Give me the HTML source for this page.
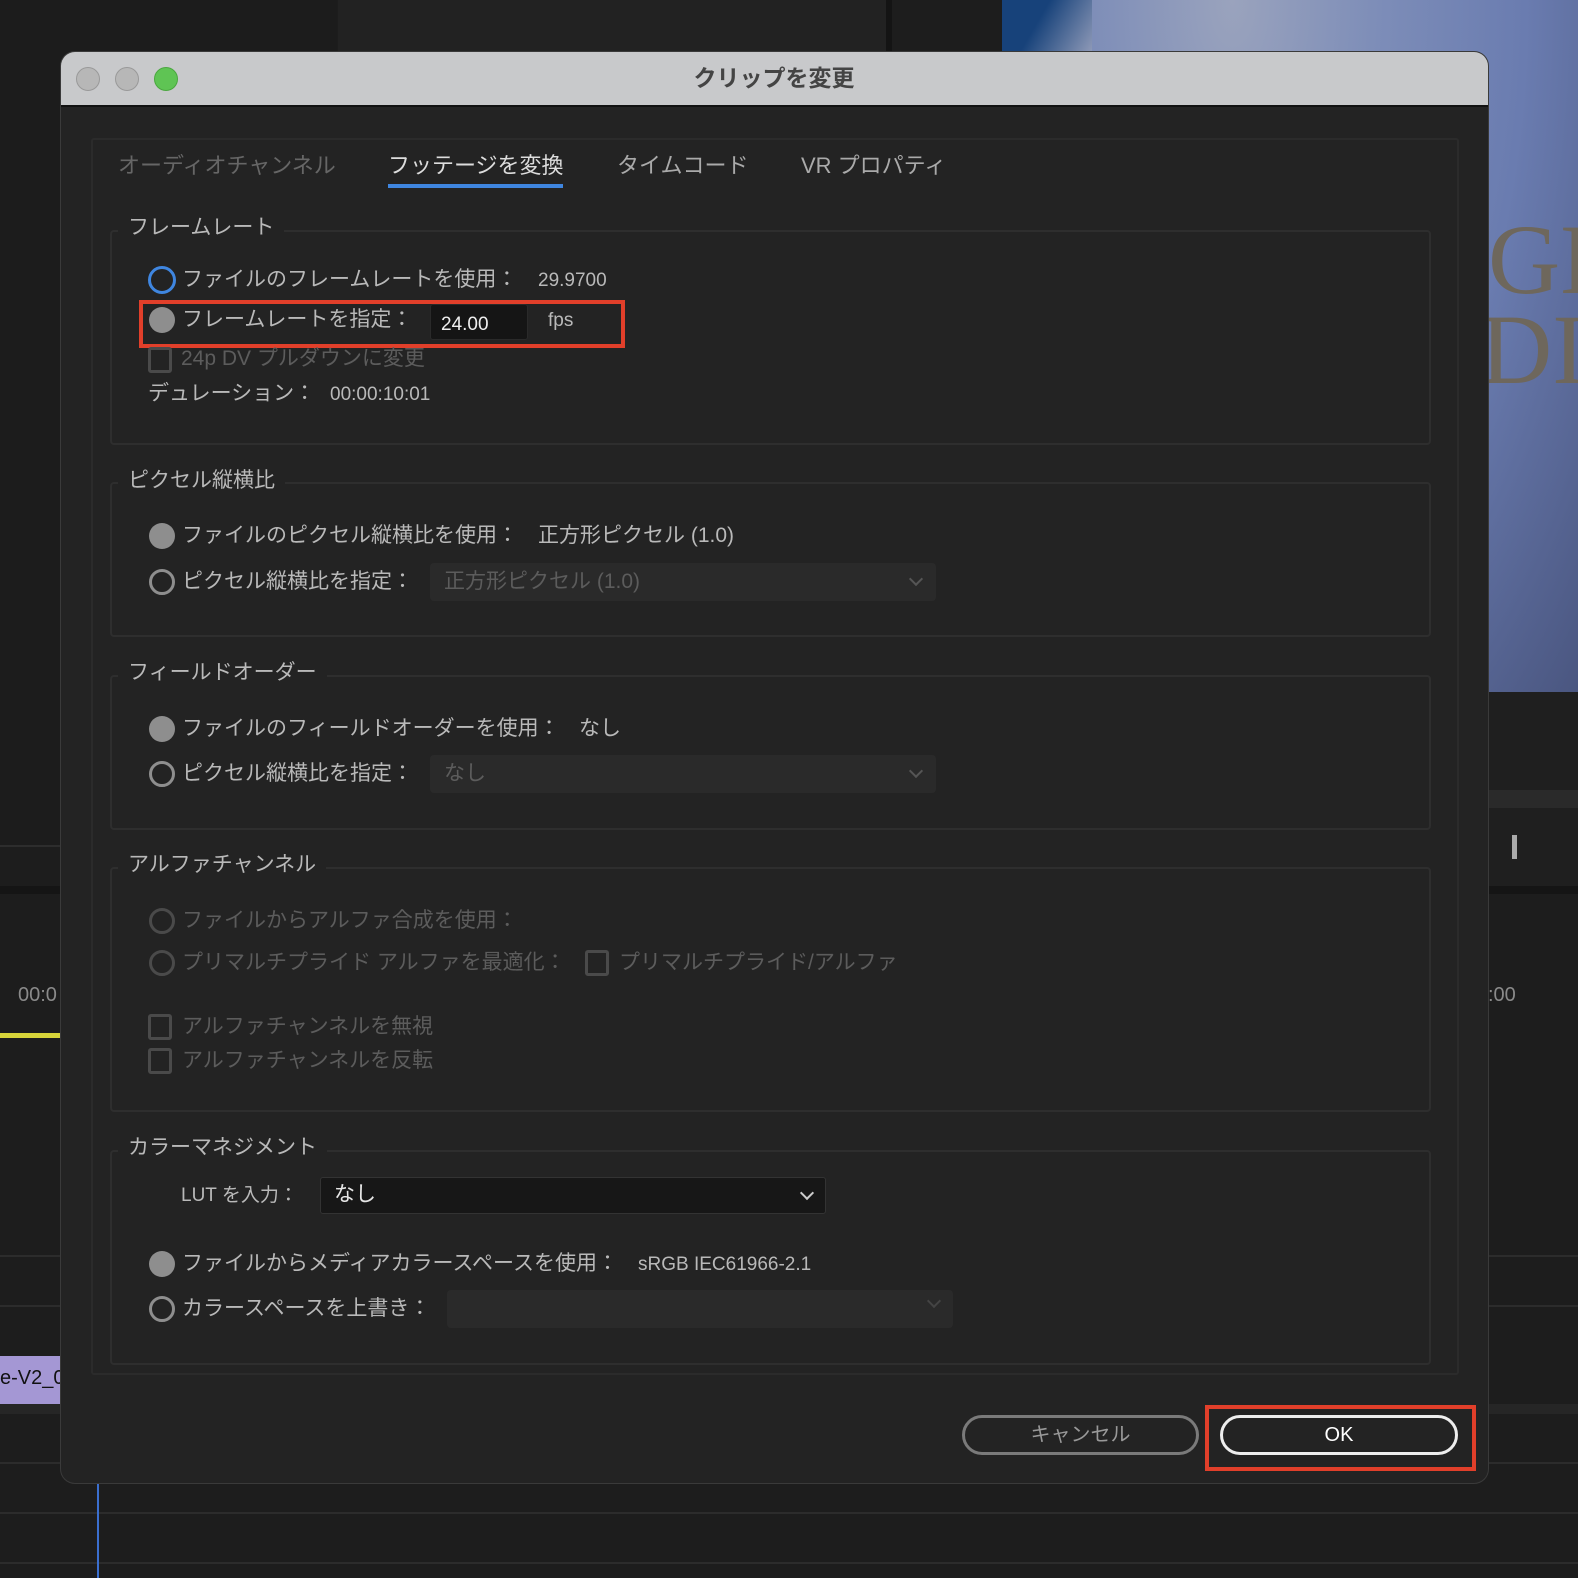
<!DOCTYPE html>
<html><head><meta charset="utf-8"><style>
*{margin:0;padding:0;box-sizing:border-box}
body{width:1578px;height:1578px;background:#1d1d1d;position:relative;overflow:hidden;font-family:"Liberation Sans","Noto Sans CJK JP",sans-serif;color:#b9b9b9}
.a{position:absolute}
.t{position:absolute;font-size:21px;line-height:26px;white-space:nowrap}
.d{color:#5c5c5c}
.rf{position:absolute;width:26px;height:26px;border-radius:50%;background:#8e8e8e}
.ro{position:absolute;width:26px;height:26px;border-radius:50%;border:3px solid #8e8e8e}
.rd{position:absolute;width:26px;height:26px;border-radius:50%;border:3px solid #4a4a4a}
.cb{position:absolute;width:24px;height:26px;border:3px solid #4a4a4a;border-radius:3px}
.grp{position:absolute;left:110px;width:1321px;border:2px solid #2e2e2e;border-radius:4px}
.gt{position:absolute;left:118px;background:#232323;padding:0 10px;font-size:21px;line-height:28px;color:#b9b9b9;white-space:nowrap}
.sel{position:absolute;height:38px;background:#2a2a2a;border-radius:4px}
.chev{position:absolute;width:10px;height:10px;border-right:2px solid #555;border-bottom:2px solid #555;transform:rotate(45deg)}
</style></head><body>
<div class="a" style="left:0;top:0;width:337px;height:845px;background:#1c1c1c"></div>
<div class="a" style="left:338px;top:0;width:548px;height:52px;background:#222"></div>
<div class="a" style="left:886px;top:0;width:6px;height:52px;background:#141414"></div>
<div class="a" style="left:1002px;top:0;width:576px;height:692px;background:radial-gradient(ellipse at 40% 0%,#9aa3bd 0%,#7d8db8 30%,#6a7cb0 60%,#4a5680 100%)"></div>
<div class="a" style="left:1002px;top:0;width:90px;height:52px;background:linear-gradient(120deg,#17427a 40%,#8e99b7)"></div>
<div class="a" style="left:1488px;top:210px;font-family:'Liberation Serif',serif;font-size:100px;color:#6e675c;line-height:100px">GE</div>
<div class="a" style="left:1480px;top:300px;font-family:'Liberation Serif',serif;font-size:100px;color:#6e675c;line-height:100px">DI</div>
<div class="a" style="left:1488px;top:692px;width:90px;height:196px;background:#1f1f1f"></div>
<div class="a" style="left:1488px;top:790px;width:90px;height:18px;background:#2a2a2a"></div>
<div class="a" style="left:1512px;top:835px;width:5px;height:24px;background:#aaa"></div>
<div class="a" style="left:0;top:845px;width:61px;height:2px;background:#2d2d2d"></div>
<div class="a" style="left:0;top:886px;width:1578px;height:8px;background:#151515"></div>
<div class="a" style="left:18px;top:984px;font-size:20px;color:#8a8a8a">00:0</div>
<div class="a" style="left:1488px;top:984px;font-size:20px;color:#8a8a8a">:00</div>
<div class="a" style="left:0;top:1033px;width:61px;height:5px;background:#d7d43a"></div>
<div class="a" style="left:0;top:1255px;width:1578px;height:2px;background:#2c2c2c"></div>
<div class="a" style="left:0;top:1305px;width:1578px;height:2px;background:#2c2c2c"></div>
<div class="a" style="left:0;top:1356px;width:61px;height:48px;background:#a497d4;color:#111;font-size:20px;line-height:44px;white-space:nowrap;overflow:hidden">e-V2_0</div>
<div class="a" style="left:0;top:1404px;width:1578px;height:10px;background:#262626"></div>
<div class="a" style="left:0;top:1462px;width:1578px;height:2px;background:#2c2c2c"></div>
<div class="a" style="left:0;top:1512px;width:1578px;height:2px;background:#2c2c2c"></div>
<div class="a" style="left:0;top:1562px;width:1578px;height:2px;background:#2c2c2c"></div>
<div class="a" style="left:97px;top:1483px;width:2px;height:95px;background:#3b6fcf"></div>

<div class="a" style="left:61px;top:52px;width:1427px;height:1431px;background:#232323;border-radius:14px;overflow:hidden;box-shadow:0 0 0 1px #3a3a3a">
  <div class="a" style="left:0;top:0;width:1427px;height:55px;background:#c8c9cb;border-bottom:2px solid #111"></div>
</div>
<div class="a" style="left:76px;top:67px;width:24px;height:24px;border-radius:50%;background:#b7b7b7;border:1px solid #999"></div>
<div class="a" style="left:115px;top:67px;width:24px;height:24px;border-radius:50%;background:#b7b7b7;border:1px solid #999"></div>
<div class="a" style="left:154px;top:67px;width:24px;height:24px;border-radius:50%;background:#5fc454;border:1px solid #4aa73f"></div>
<div class="a" style="left:0;top:62px;width:1548px;text-align:center;font-size:23px;font-weight:bold;color:#444;line-height:32px">クリップを変更</div>

<div class="a" style="left:91px;top:138px;width:1368px;height:1237px;border:2px solid #2b2b2b;border-radius:3px"></div>
<div class="t" style="left:118px;top:153px;font-size:22px;color:#666">オーディオチャンネル</div>
<div class="t" style="left:388px;top:153px;font-size:22px;color:#ddd">フッテージを変換</div>
<div class="a" style="left:388px;top:184px;width:175px;height:4px;background:#3f86e0"></div>
<div class="t" style="left:617px;top:153px;font-size:22px;color:#aaa">タイムコード</div>
<div class="t" style="left:801px;top:153px;font-size:22px;color:#aaa">VR プロパティ</div>

<div class="grp" style="top:230px;height:215px"></div>
<div class="gt" style="top:214px">フレームレート</div>
<div class="a" style="left:148px;top:266px;width:28px;height:28px;border-radius:50%;border:3.5px solid #3f86e0"></div>
<div class="t" style="left:182px;top:267px">ファイルのフレームレートを使用：</div>
<div class="t" style="left:538px;top:268px;font-size:19px">29.9700</div>
<div class="rf" style="left:149px;top:307px"></div>
<div class="t" style="left:182px;top:307px">フレームレートを指定：</div>
<div class="a" style="left:430px;top:304px;width:98px;height:36px;background:#151515;border-radius:3px;border:1px solid #2a2a2a"></div>
<div class="t" style="left:441px;top:312px;font-size:19px;color:#eee">24.00</div>
<div class="t" style="left:548px;top:308px;font-size:19px">fps</div>
<div class="a" style="left:139px;top:300px;width:486px;height:48px;border:4px solid #e13f2a"></div>
<div class="cb" style="left:148px;top:347px"></div>
<div class="t d" style="left:181px;top:346px">24p DV プルダウンに変更</div>
<div class="t" style="left:148px;top:381px">デュレーション：</div>
<div class="t" style="left:330px;top:382px;font-size:19px">00:00:10:01</div>

<div class="grp" style="top:482px;height:155px"></div>
<div class="gt" style="top:467px">ピクセル縦横比</div>
<div class="rf" style="left:149px;top:523px"></div>
<div class="t" style="left:182px;top:523px">ファイルのピクセル縦横比を使用：</div>
<div class="t" style="left:538px;top:523px">正方形ピクセル (1.0)</div>
<div class="ro" style="left:149px;top:569px"></div>
<div class="t" style="left:182px;top:569px">ピクセル縦横比を指定：</div>
<div class="sel" style="left:430px;top:563px;width:506px"></div>
<div class="t d" style="left:444px;top:569px">正方形ピクセル (1.0)</div>
<div class="chev" style="left:911px;top:574px"></div>

<div class="grp" style="top:675px;height:155px"></div>
<div class="gt" style="top:659px">フィールドオーダー</div>
<div class="rf" style="left:149px;top:716px"></div>
<div class="t" style="left:182px;top:716px">ファイルのフィールドオーダーを使用：</div>
<div class="t" style="left:579px;top:716px">なし</div>
<div class="ro" style="left:149px;top:761px"></div>
<div class="t" style="left:182px;top:761px">ピクセル縦横比を指定：</div>
<div class="sel" style="left:430px;top:755px;width:506px"></div>
<div class="t d" style="left:444px;top:761px">なし</div>
<div class="chev" style="left:911px;top:766px"></div>

<div class="grp" style="top:867px;height:245px"></div>
<div class="gt" style="top:851px">アルファチャンネル</div>
<div class="rd" style="left:149px;top:908px"></div>
<div class="t d" style="left:182px;top:908px">ファイルからアルファ合成を使用：</div>
<div class="rd" style="left:149px;top:950px"></div>
<div class="t d" style="left:182px;top:950px">プリマルチプライド アルファを最適化：</div>
<div class="cb" style="left:585px;top:950px"></div>
<div class="t d" style="left:619px;top:950px">プリマルチプライド/アルファ</div>
<div class="cb" style="left:148px;top:1014px"></div>
<div class="t d" style="left:182px;top:1014px">アルファチャンネルを無視</div>
<div class="cb" style="left:148px;top:1048px"></div>
<div class="t d" style="left:182px;top:1048px">アルファチャンネルを反転</div>

<div class="grp" style="top:1150px;height:215px"></div>
<div class="gt" style="top:1134px">カラーマネジメント</div>
<div class="t" style="left:181px;top:1183px;font-size:19px">LUT を入力：</div>
<div class="a" style="left:320px;top:1177px;width:506px;height:37px;background:#171717;border:1px solid #333;border-radius:3px"></div>
<div class="t" style="left:334px;top:1182px;color:#e6e6e6">なし</div>
<div class="chev" style="left:802px;top:1188px;border-color:#ccc"></div>
<div class="rf" style="left:149px;top:1251px"></div>
<div class="t" style="left:182px;top:1251px">ファイルからメディアカラースペースを使用：</div>
<div class="t" style="left:638px;top:1252px;font-size:19px">sRGB IEC61966-2.1</div>
<div class="ro" style="left:149px;top:1296px"></div>
<div class="t" style="left:182px;top:1296px">カラースペースを上書き：</div>
<div class="sel" style="left:447px;top:1290px;width:506px"></div>
<div class="chev" style="left:929px;top:1296px;border-color:#444"></div>

<div class="a" style="left:962px;top:1415px;width:237px;height:40px;border:3px solid #7a7a7a;border-radius:20px;text-align:center;font-size:20px;line-height:34px;color:#999">キャンセル</div>
<div class="a" style="left:1220px;top:1415px;width:238px;height:40px;border:3px solid #eee;border-radius:20px;text-align:center;font-size:20px;line-height:34px;color:#fff">OK</div>
<div class="a" style="left:1205px;top:1405px;width:271px;height:66px;border:4px solid #e13f2a"></div>
</body></html>
